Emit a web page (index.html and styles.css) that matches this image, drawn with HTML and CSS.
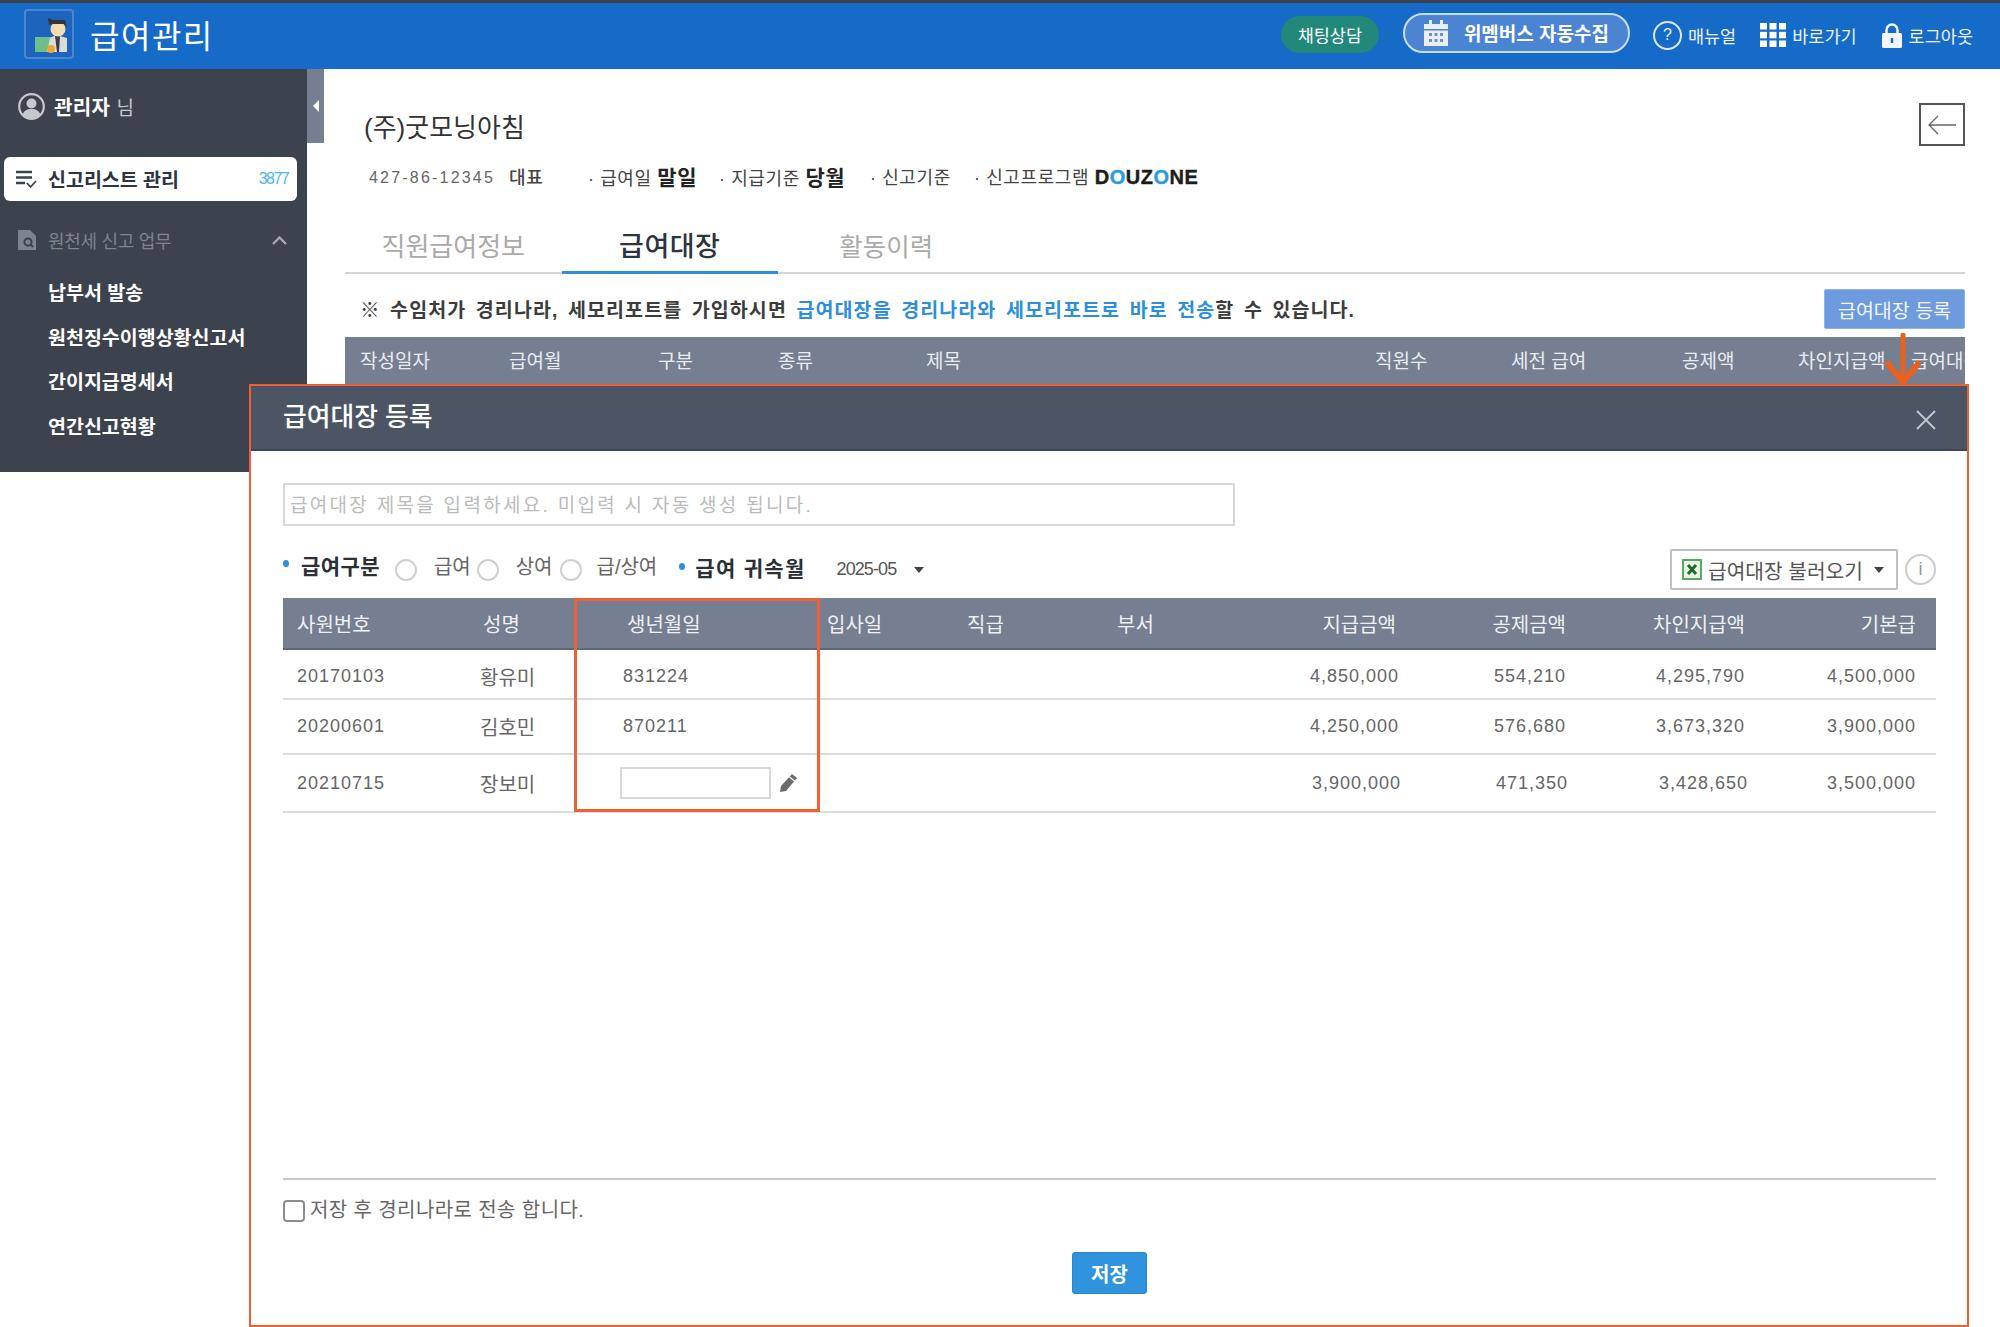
FILE: index.html
```html
<!DOCTYPE html>
<html lang="ko">
<head>
<meta charset="utf-8">
<title>급여관리</title>
<link rel="stylesheet" href="styles.css">
</head>
<body>
<div class="page">
  <header class="topbar">
    <div class="logo">
      <svg width="46" height="46" viewBox="0 0 46 46">
        <rect x="9" y="26" width="21" height="15" fill="#6cc08a"/>
        <path d="M21 41 L24 27 L30 24 L41 27 L41 41Z" fill="#d9dcdf"/>
        <path d="M29 25 L31 41 L33 41 L34 25Z" fill="#3d3d3d"/>
        <circle cx="32" cy="18" r="7.5" fill="#f6dcae"/>
        <path d="M23 14 L22 7 L27 9 L39 9 L41 16 L38 13 L27 13Z" fill="#33363a"/>
        <circle cx="25" cy="38" r="4" fill="#f3a72a"/>
      </svg>
    </div>
    <div class="app-title">급여관리</div>
    <div class="top-actions">
      <a class="chat-pill">채팅상담</a>
      <a class="collect-pill">
        <svg width="24" height="26" viewBox="0 0 24 26"><rect x="5" y="0" width="3" height="6" fill="#e8eef8"/><rect x="16" y="0" width="3" height="6" fill="#e8eef8"/><path d="M0 4h24v5H0z" fill="#e8eef8"/><path d="M0 10.5h24V26H0z" fill="#e8eef8"/><g fill="#6f8fc4"><rect x="5" y="13" width="3" height="3"/><rect x="10.500" y="13" width="3" height="3"/><rect x="16" y="13" width="3" height="3"/><rect x="5" y="19" width="3" height="3"/><rect x="10.500" y="19" width="3" height="3"/><rect x="16" y="19" width="3" height="3"/></g></svg>
        <span>위멤버스 자동수집</span>
      </a>
      <a class="top-link first-link"><span class="help-circle">?</span>매뉴얼</a>
      <a class="top-link">
        <svg width="26" height="24" viewBox="0 0 26 24" fill="#fff"><rect width="7" height="6.500"/><rect x="9.500" width="7" height="6.500"/><rect x="19" width="7" height="6.500"/><rect y="8.800" width="7" height="6.500"/><rect x="9.500" y="8.800" width="7" height="6.500"/><rect x="19" y="8.800" width="7" height="6.500"/><rect y="17.500" width="7" height="6.500"/><rect x="9.500" y="17.500" width="7" height="6.500"/><rect x="19" y="17.500" width="7" height="6.500"/></svg>
        바로가기
      </a>
      <a class="top-link lock-link">
        <svg width="20" height="25" viewBox="0 0 20 25"><path d="M4.500 11V7a5.500 5.500 0 0 1 11 0v4" fill="none" stroke="#f2f5fb" stroke-width="2.500"/><rect y="10" width="20" height="15" rx="1.500" fill="#f2f5fb"/><rect x="8.800" y="15" width="2.400" height="5" fill="#166bc8"/></svg>
        로그아웃
      </a>
    </div>
  </header>

  <div class="layout">
    <aside class="sidebar">
      <div class="user-row">
        <svg width="27" height="27" viewBox="0 0 27 27"><circle cx="13.500" cy="13.500" r="12.300" fill="#3c424e" stroke="#c5c8ce" stroke-width="2.200"/><circle cx="13.500" cy="10.500" r="5" fill="#c5c8ce"/><path d="M4.500 22c1.500-5 5-6 9-6s7.500 1 9 6a12 12 0 0 1-18 0z" fill="#c5c8ce"/></svg>
        <span class="user-name"><b>관리자</b> <i>님</i></span>
      </div>
      <div class="list-item">
        <svg width="21" height="19" viewBox="0 0 21 19" fill="none" stroke="#3c424e" stroke-width="2.400"><path d="M0 2h16M0 7.500h16M0 13h9"/><path d="M11 13l3.500 4 5.500-6" stroke-width="1.800"/></svg>
        <span class="list-label">신고리스트 관리</span>
        <span class="list-count">3877</span>
      </div>
      <div class="section-row">
        <svg width="18" height="20" viewBox="0 0 18 20"><path d="M0 0h12l6 6v14H0z" fill="#7d838f"/><circle cx="10" cy="12" r="3.600" fill="none" stroke="#3c424e" stroke-width="2"/><path d="M12.500 14.500l2.500 2.500" stroke="#3c424e" stroke-width="2"/></svg>
        <span class="section-label">원천세 신고 업무</span>
        <svg class="chev" width="15" height="9" viewBox="0 0 15 9" fill="none" stroke="#a4a8b0" stroke-width="2.400"><path d="M1 8l6.500-6.500L14 8"/></svg>
      </div>
      <ul class="side-menu">
        <li>납부서 발송</li>
        <li>원천징수이행상황신고서</li>
        <li>간이지급명세서</li>
        <li>연간신고현황</li>
      </ul>
    </aside>
    <div class="handle"><span class="handle-tri"></span></div>

    <main class="content">
      <div class="company-row">
        <h1 class="company">(주)굿모닝아침</h1>
        <a class="back-btn"><svg width="28" height="20" viewBox="0 0 28 20" fill="none" stroke="#666" stroke-width="1.300"><path d="M28 10H1M10 1l-9 9 9 9"/></svg></a>
      </div>
      <div class="info-row">
        <span class="biz-no">427-86-12345</span>
        <b class="rep">대표</b>
        <span class="info">· 급여일 <b>말일</b></span>
        <span class="info">· 지급기준 <b>당월</b></span>
        <span class="info">· 신고기준</span>
        <span class="info">· 신고프로그램 <b class="douzone">D<em>O</em>UZ<em>O</em>NE</b></span>
      </div>
      <nav class="tabs">
        <a class="tab">직원급여정보</a>
        <a class="tab active">급여대장</a>
        <a class="tab tab-last">활동이력</a>
      </nav>
      <div class="notice-row">
        <p class="notice">※ 수임처가 경리나라, 세모리포트를 가입하시면 <span>급여대장을 경리나라와 세모리포트로 바로 전송</span>할 수 있습니다.</p>
        <button class="reg-btn">급여대장 등록</button>
      </div>
      <div class="list-head">
        <span>작성일자</span><span>급여월</span><span>구분</span><span>종류</span><span>제목</span><span>직원수</span><span>세전 급여</span><span>공제액</span><span>차인지급액</span><span>급여대장</span>
      </div>
    </main>
  </div>

  <svg class="down-arrow" width="36" height="52" viewBox="0 0 36 52" fill="none" stroke="#e8611f" stroke-linecap="round"><path d="M18 2v46" stroke-width="5"/><path d="M3 31l15 18 15-18" stroke-width="6"/></svg>

  <section class="modal">
    <div class="modal-head">
      <h2 class="modal-title">급여대장 등록</h2>
      <svg class="modal-close" width="22" height="20" viewBox="0 0 22 20" stroke="#c4c8ce" stroke-width="1.800"><path d="M2 1l18 18M20 1L2 19"/></svg>
    </div>
    <div class="modal-body">
      <input class="title-input" type="text" placeholder="급여대장 제목을 입력하세요. 미입력 시 자동 생성 됩니다.">
      <div class="filter-row">
        <i class="dot"></i><b class="f-label f1">급여구분</b>
        <input class="radio r1" type="radio" name="k"><span class="opt o1">급여</span>
        <input class="radio r2" type="radio" name="k"><span class="opt o2">상여</span>
        <input class="radio r3" type="radio" name="k"><span class="opt o3">급/상여</span>
        <i class="dot dot2"></i><b class="f-label f2">급여 귀속월</b>
        <span class="month">2025-05</span><i class="caret cm"></i>
        <button class="load-btn">
          <svg width="20" height="21" viewBox="0 0 20 21"><rect x="1" y="1" width="18" height="19" fill="#e8f3e8" stroke="#5aa860" stroke-width="2"/><path d="M6 6l8 9M14 6l-8 9" stroke="#1f6d2a" stroke-width="3"/></svg>
          급여대장 불러오기<i class="caret"></i>
        </button>
        <span class="info-circle">i</span>
      </div>
      <div class="table-wrap">
        <table class="pay-table">
          <colgroup><col class="c1"><col class="c2"><col class="c3"><col class="c4"><col class="c5"><col class="c6"><col class="c7"><col class="c8"><col class="c9"><col class="c10"></colgroup>
          <thead>
            <tr><th class="p-emp">사원번호</th><th class="p-name-h">성명</th><th class="p-birth-h">생년월일</th><th class="p-join">입사일</th><th class="p-grade">직급</th><th class="p-grade">부서</th><th class="num a-h">지급금액</th><th class="num b-d">공제금액</th><th class="num c-d">차인지급액</th><th class="num d-d">기본급</th></tr>
          </thead>
          <tbody>
            <tr class="r-a"><td class="p-emp">20170103</td><td class="p-name">황유미</td><td class="p-birth">831224</td><td></td><td></td><td></td><td class="num a-d">4,850,000</td><td class="num b-d">554,210</td><td class="num c-d">4,295,790</td><td class="num d-d">4,500,000</td></tr>
            <tr class="r-b"><td class="p-emp">20200601</td><td class="p-name">김호민</td><td class="p-birth">870211</td><td></td><td></td><td></td><td class="num a-d">4,250,000</td><td class="num b-d">576,680</td><td class="num c-d">3,673,320</td><td class="num d-d">3,900,000</td></tr>
            <tr class="r-c"><td class="p-emp">20210715</td><td class="p-name">장보미</td><td class="p-edit"><div class="edit-cell"><input class="birth-input" type="text"><svg width="20" height="20" viewBox="0 0 20 20"><path d="M14 1l5 4L8 18l-6 1 1-6z" fill="#6b6b6b"/><path d="M11.500 4l5 4" stroke="#fff" stroke-width="1.200"/></svg></div></td><td></td><td></td><td></td><td class="num a-s">3,900,000</td><td class="num b-s">471,350</td><td class="num c-s">3,428,650</td><td class="num d-d">3,500,000</td></tr>
          </tbody>
        </table>
        <div class="highlight"></div>
      </div>
      <div class="modal-foot">
        <label class="send-check"><input class="check" type="checkbox"><span>저장 후 경리나라로 전송 합니다.</span></label>
        <div class="save-row"><button class="save-btn">저장</button></div>
      </div>
    </div>
  </section>
</div>
</body>
</html>
```

FILE: styles.css
```css
* { box-sizing: border-box; }
html, body { margin: 0; padding: 0; }
body {
  font-family: "Liberation Sans", "Noto Sans CJK KR", sans-serif;
  font-size: 18px;
  color: #555;
  background: #fff;
}
.page {
  position: relative;
  width: 2000px;
  height: 1327px;
  overflow: hidden;
  display: flex;
  flex-direction: column;
}
a { color: inherit; text-decoration: none; }
h1, h2, p, ul { margin: 0; padding: 0; }
i, em { font-style: normal; }

/* top bar */
.topbar {
  flex: none;
  height: 69px;
  background: #166bc8;
  border-top: 3px solid #3c424e;
  padding: 0 27px 5px 24px;
  display: flex;
  align-items: center;
  color: #fff;
}
.logo {
  width: 50px;
  height: 50px;
  border: 2px solid rgba(255, 255, 255, .22);
  border-radius: 4px;
  background: rgba(40, 90, 170, .35);
}
.logo svg { display: block; }
.app-title { margin: 6px 0 0 16px; font-size: 32px; letter-spacing: 1.500px; line-height: 1; }
.top-actions { margin-left: auto; display: flex; align-items: center; }
.chat-pill {
  width: 98px;
  height: 37px;
  border-radius: 19px;
  background: #22887a;
  font-size: 17.500px;
  display: flex;
  align-items: center;
  justify-content: center;
  margin-top: 1px;
}
.collect-pill {
  width: 227px;
  height: 40px;
  margin: 0 0 2px 24px;
  border-radius: 20px;
  background: #4a84d2;
  border: 2px solid #c9dcf5;
  display: flex;
  align-items: center;
  padding-left: 19px;
  font-weight: 700;
  font-size: 19px;
  gap: 16px;
  white-space: nowrap;
}
.top-link { display: flex; align-items: center; font-size: 17.500px; margin-left: 24px; gap: 6px; color: #eef3fb; margin-top: 3px; }
.first-link { margin-left: 23px; }
.lock-link { margin-left: 25px; gap: 7px; }
.help-circle {
  width: 29px;
  height: 29px;
  border: 2px solid #dbe6f6;
  border-radius: 50%;
  display: flex;
  align-items: center;
  justify-content: center;
  font-size: 16px;
}

/* layout */
.layout { display: flex; align-items: flex-start; flex: 1; }
.sidebar {
  flex: none;
  width: 307px;
  height: 403px;
  background: #3c424e;
  padding-top: 24px;
}
.user-row { display: flex; align-items: center; height: 27px; padding-left: 18px; gap: 9px; color: #fff; }
.user-name { font-size: 20px; letter-spacing: .4px; }
.user-name i { font-size: 19px; color: #c5c8ce; }
.list-item {
  height: 44px;
  margin: 37px 10px 0 4px;
  background: #fff;
  border-radius: 6px;
  display: flex;
  align-items: center;
  padding: 0 9px 0 12px;
}
.list-label { margin: 0 0 2px 11px; font-size: 19.500px; font-weight: 700; color: #2e3440; white-space: nowrap; }
.list-count { margin-left: auto; font-size: 16px; color: #4db8f0; letter-spacing: -1.6px; }
.section-row { height: 20px; margin-top: 29px; display: flex; align-items: center; padding: 0 20px 0 18px; }
.section-label { margin-left: 12px; color: #7d838f; font-size: 18px; letter-spacing: -.3px; }
.chev { margin-left: auto; }
.side-menu { list-style: none; margin-top: 21px; padding-left: 48px; color: #fff; font-weight: 700; font-size: 19.500px; }
.side-menu li { height: 44.600px; line-height: 44px; white-space: nowrap; }
.handle {
  flex: none;
  width: 17px;
  height: 74px;
  background: #757f91;
  display: flex;
  align-items: center;
  padding-left: 6px;
}
.handle-tri {
  width: 0;
  height: 0;
  border-style: solid;
  border-width: 6px 6px 6px 0;
  border-color: transparent #fff transparent transparent;
}

/* content */
.content { flex: none; width: 1620px; margin-left: 21px; }
.company-row { display: flex; justify-content: space-between; padding-top: 34px; height: 77px; }
.company { font-size: 26px; font-weight: 400; color: #333; padding: 8px 0 0 19px; line-height: 34px; }
.back-btn { width: 46px; height: 43px; border: 2px solid #555; display: flex; align-items: center; justify-content: center; }
.info-row {
  margin-top: 15px;
  height: 24px;
  padding-left: 24px;
  display: grid;
  grid-template-columns: 140px 79px 131px 151px 104px auto;
  justify-content: start;
  align-items: center;
  font-size: 18px;
  letter-spacing: .6px;
  white-space: nowrap;
  color: #444;
}
.biz-no { margin-top: 3px; font-size: 16px; letter-spacing: 2.200px; color: #666; }
.rep { font-weight: 500; font-size: 18px; }
.info b { font-size: 21px; color: #222; }
.info .douzone { font-family: "Liberation Sans", sans-serif; font-size: 20px; letter-spacing: .5px; color: #1c1c1c; -webkit-text-stroke: .4px #1c1c1c; }
.douzone em { color: #2a9be0; -webkit-text-stroke: .4px #2a9be0; }
.tabs { margin-top: 35px; height: 54px; display: flex; border-bottom: 2px solid #d5d5d5; }
.tab { width: 216.500px; height: 54px; text-align: center; font-size: 26px; line-height: 55px; color: #aaa; }
.tab-last { font-size: 25.500px; }
.tab.active { color: #2d3440; font-size: 27px; letter-spacing: .5px; font-weight: 500; border-bottom: 3px solid #2d8fdc; }
.notice-row { display: flex; justify-content: space-between; align-items: center; margin-top: 15px; height: 40px; }
.notice { padding: 0 0 2px 15px; font-size: 19.500px; font-weight: 700; color: #3c3c3c; letter-spacing: 1.100px; word-spacing: 3px; white-space: nowrap; }
.notice span { color: #2d8fdc; }
.reg-btn { width: 141px; height: 40px; border: 1px solid #8fb3e6; border-radius: 2px; background: #6e9ade; color: #f2f6fc; font: inherit; font-size: 19.500px; }
.list-head {
  margin-top: 8px;
  height: 60px;
  background: #757f91;
  color: #e9ecf1;
  padding: 9px 0 0 15px;
  display: grid;
  grid-template-columns: 149px 149px 120px 148px 449px 136px 171px 116px 113px 60px;
  font-size: 19px;
  overflow: hidden;
  white-space: nowrap;
}

.down-arrow { position: absolute; left: 1885px; top: 333px; z-index: 3; }

/* modal */
.modal {
  position: absolute;
  z-index: 2;
  left: 249px;
  top: 384px;
  width: 1720px;
  height: 943px;
  border: 2px solid #f15f35;
  background: #fff;
  display: flex;
  flex-direction: column;
}
.modal-head {
  flex: none;
  height: 65px;
  background: #4b5563;
  border-bottom: 2px solid #3e4653;
  display: flex;
  align-items: center;
  justify-content: space-between;
  padding: 0 30px 0 32px;
}
.modal-title { color: #fff; font-size: 25.800px; font-weight: 500; margin-bottom: 7px; }
.modal-close { margin-top: 4px; }
.modal-body { flex: 1; display: flex; flex-direction: column; padding: 32px 31px 31px 32px; }
.title-input {
  width: 952px;
  height: 43px;
  flex: none;
  border: 2px solid #d8d8d8;
  padding: 2px 5px 0;
  font: inherit;
  font-size: 19px;
  letter-spacing: 2.300px;
  outline: none;
}
.title-input::placeholder { color: #bbb; opacity: 1; }
.filter-row { margin-top: 23px; height: 41px; flex: none; display: flex; align-items: center; white-space: nowrap; }
.dot { width: 6px; height: 7px; border-radius: 50%; background: #2d8fdc; margin-bottom: 13px; flex: none; }
.dot2 { margin-left: 22px; margin-bottom: 6px; }
.f-label { font-size: 21px; letter-spacing: .4px; color: #2b2f36; }
.f1 { margin-left: 12px; margin-bottom: 9px; }
.f2 { margin-left: 10px; margin-bottom: 5px; letter-spacing: 1.300px; }
.radio {
  appearance: none;
  -webkit-appearance: none;
  width: 22px;
  height: 22px;
  margin: 0;
  border: 2px solid #d0d0d0;
  border-radius: 50%;
  background: #fff;
  flex: none;
}
.r1 { margin-left: 15px; }
.r2 { margin-left: 6px; }
.r3 { margin-left: 7px; }
.opt { font-size: 20px; color: #666; margin-bottom: 8px; }
.o1, .o2 { margin-left: 17px; }
.o3 { margin-left: 15px; }
.month { margin-left: 31px; font-size: 18px; letter-spacing: -.9px; color: #555; }
.caret {
  display: inline-block;
  width: 0;
  height: 0;
  border-style: solid;
  border-width: 6px 5.500px 0;
  border-color: #444 transparent transparent;
}
.cm { margin-left: 18px; }
.load-btn {
  margin-left: auto;
  width: 228px;
  height: 41px;
  background: #fff;
  border: 2px solid #bfbfbf;
  border-radius: 2px;
  font: inherit;
  font-size: 20.300px;
  color: #555;
  display: flex;
  align-items: center;
  padding: 0 0 0 10px;
  gap: 6px;
  white-space: nowrap;
}
.load-btn .caret { margin-left: 5px; }
.info-circle {
  margin-left: 7px;
  width: 31px;
  height: 31px;
  border: 2px solid #ccc;
  border-radius: 50%;
  display: flex;
  align-items: center;
  justify-content: center;
  color: #999;
  font-size: 18px;
}
.table-wrap { position: relative; margin-top: 8px; flex: none; }
.pay-table { width: 1653px; table-layout: fixed; border-collapse: collapse; }
.c1 { width: 187px; } .c2 { width: 105px; } .c3 { width: 245px; } .c4 { width: 130px; } .c5 { width: 150px; }
.c6 { width: 140px; } .c7 { width: 170px; } .c8 { width: 170px; } .c9 { width: 180px; } .c10 { width: 176px; }
.pay-table th {
  height: 51px;
  background: #757f91;
  border-bottom: 2px solid #5f6879;
  color: #eef0f4;
  font-weight: 400;
  font-size: 20px;
  text-align: left;
  padding: 0;
}
.pay-table td {
  padding: 0;
  border-bottom: 2px solid #dcdcdc;
  color: #666;
  letter-spacing: 1px;
  font-size: 18px;
}
.pay-table td.p-name { letter-spacing: 0; font-size: 20px; }
.r-a td { height: 50px; }
.pay-table .r-a td { padding-top: 5px; }
.r-b td { height: 55px; }
.r-c td { height: 58px; }
.pay-table .num { text-align: right; }
.pay-table .p-emp { padding-left: 14px; }
.pay-table .p-name-h { padding-left: 13px; }
.pay-table .p-name { padding-left: 10px; }
.pay-table .p-birth-h { padding-left: 52px; }
.pay-table .p-birth { padding-left: 48px; }
.pay-table .p-edit { padding-left: 45px; }
.pay-table .p-join { padding-left: 7px; }
.pay-table .p-grade { padding-left: 17px; }
.pay-table .a-h { padding-right: 14px; }
.pay-table .a-d { padding-right: 11px; }
.pay-table .a-s { padding-right: 9px; }
.pay-table .b-d { padding-right: 14px; }
.pay-table .b-s { padding-right: 12px; }
.pay-table .c-d { padding-right: 15px; }
.pay-table .c-s { padding-right: 12px; }
.pay-table .d-d { padding-right: 20px; }
.edit-cell { display: flex; align-items: center; gap: 7px; }
.birth-input { width: 151px; height: 32px; border: 2px solid #d8d8d8; background: #fff; outline: none; }
.highlight {
  position: absolute;
  left: 291px;
  top: 0;
  width: 246px;
  height: 214px;
  border: 3px solid #f15f35;
  pointer-events: none;
}
.modal-foot { margin-top: auto; border-top: 2px solid #c8c8c8; }
.send-check { display: flex; align-items: center; margin-top: 20px; height: 22px; color: #666; font-size: 20px; white-space: nowrap; }
.send-check span { margin-left: 5px; margin-bottom: 6px; letter-spacing: .4px; }
.check {
  appearance: none;
  -webkit-appearance: none;
  width: 22px;
  height: 22px;
  margin: 0;
  border: 2px solid #8c8c8c;
  border-radius: 4px;
  background: #fff;
  flex: none;
}
.save-row { display: flex; justify-content: center; margin-top: 30px; }
.save-btn {
  width: 75px;
  height: 42px;
  border: 1px solid #2b85cc;
  border-radius: 3px;
  background: #2f93dd;
  color: #fff;
  font: inherit;
  font-size: 20px;
  font-weight: 700;
}
```
